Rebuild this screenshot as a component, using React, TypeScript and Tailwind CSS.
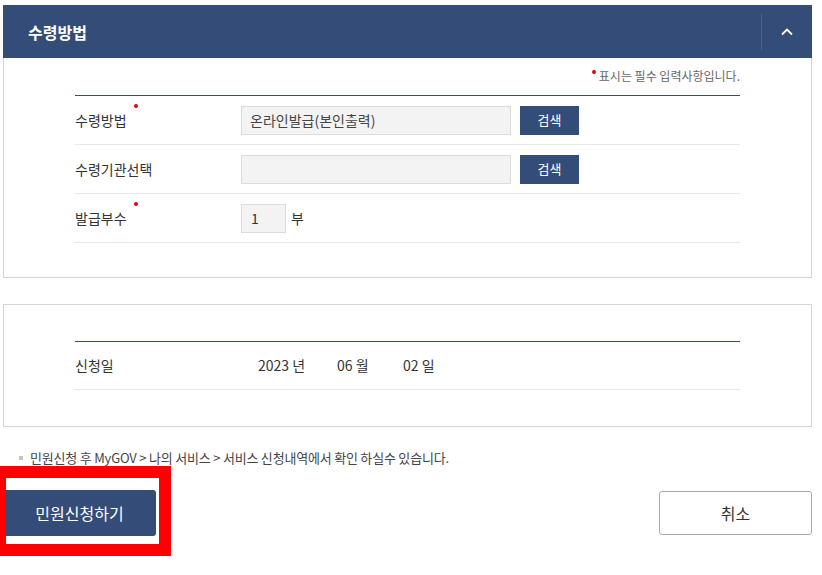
import React from "react";

const font = { fontFamily: '"Noto Sans CJK KR", "Noto Sans", sans-serif' };

function Req() {
  return <span className="mb-[28px] ml-[7px] h-[4px] w-[4px] rounded-full bg-[#e60012]" />;
}

function Row({ label, required, children }: { label: string; required?: boolean; children: React.ReactNode }) {
  return (
    <div className="flex h-[49px] items-center border-b border-[#e8e8e8]">
      <div className="flex w-[166px] items-center text-[14px] text-[#333]">
        <span className="leading-[20px]">{label}</span>
        {required && <Req />}
      </div>
      {children}
    </div>
  );
}

export default function App() {
  return (
    <div className="min-h-[575px] w-[822px] bg-white pl-[3px] pt-[5px]" style={font}>
      <div className="w-[809px]">
        {/* 수령방법 panel */}
        <div className="flex h-[53px] items-center justify-between bg-[#344c78]">
          <h2 className="pl-[25px] text-[16px] font-bold leading-[20px] text-white">수령방법</h2>
          <div className="flex h-[36px] items-center border-l border-[#4b6190]">
            <svg className="mx-[15px] h-[20px] w-[20px]" viewBox="0 0 20 20" fill="none">
              <path d="M5 12.5 L10 7.5 L15 12.5" stroke="white" strokeWidth="1.8" />
            </svg>
          </div>
        </div>
        <div className="border-x border-b border-[#d5d5d5] px-[71px] pb-[34px]">
          <div className="flex h-[37px] items-center justify-end pb-[2px] text-[12px] leading-[16px] text-[#666]">
            <span className="-mt-[8px] mr-[3px] h-[4px] w-[4px] rounded-full bg-[#e60012]" />
            표시는 필수 입력사항입니다.
          </div>
          <div className="border-t border-[#344c78]">
            <Row label="수령방법" required>
              <div className="flex h-[29px] w-[270px] items-center border border-[#dcdcdc] bg-[#f3f3f3] px-[8px] text-[14px] text-[#444]">
                온라인발급(본인출력)
              </div>
              <button className="ml-[9px] h-[29px] w-[59px] bg-[#344c78] text-[13px] text-white">검색</button>
            </Row>
            <Row label="수령기관선택">
              <div className="h-[29px] w-[270px] border border-[#dcdcdc] bg-[#f3f3f3]" />
              <button className="ml-[9px] h-[29px] w-[59px] bg-[#344c78] text-[13px] text-white">검색</button>
            </Row>
            <Row label="발급부수" required>
              <div className="flex h-[29px] w-[45px] items-center border border-[#dcdcdc] bg-[#f3f3f3] px-[9px] text-[14px] text-[#333]">
                1
              </div>
              <span className="ml-[5px] text-[14px] text-[#333]">부</span>
            </Row>
          </div>
        </div>

        {/* 신청일 panel */}
        <div className="mt-[26px] border border-[#d5d5d5] px-[71px] py-[36px]">
          <div className="border-t border-[#344c78]">
            <div className="flex h-[48px] items-center border-b border-[#e8e8e8] text-[14px] text-[#333]">
              <span className="w-[183px]">신청일</span>
              <span className="w-[79px]">2023 년</span>
              <span className="w-[66px]">06 월</span>
              <span>02 일</span>
            </div>
          </div>
        </div>

        {/* note */}
        <div className="mt-[23px] flex items-center pl-[16px] text-[13px] leading-[16px] tracking-[-0.2px] text-[#444]">
          <span className="mr-[7px] h-[4px] w-[4px] bg-[#c4c4c4]" />
          민원신청 후 MyGOV &gt; 나의 서비스 &gt; 서비스 신청내역에서 확인 하실수 있습니다.
        </div>

        {/* buttons */}
        <div className="relative mt-[24px] flex items-center justify-between">
          <button className="h-[46px] w-[153px] rounded-[3px] bg-[#344c78] text-[16px] text-white">
            민원신청하기
          </button>
          <button className="h-[44px] w-[153px] rounded-[3px] border border-[#aaa] bg-white text-[16px] text-[#333]">
            취소
          </button>
          <div className="absolute left-[-9px] top-[-24px] h-[90px] w-[177px] border-[12px] border-[#ff0000]" />
        </div>
      </div>
    </div>
  );
}
